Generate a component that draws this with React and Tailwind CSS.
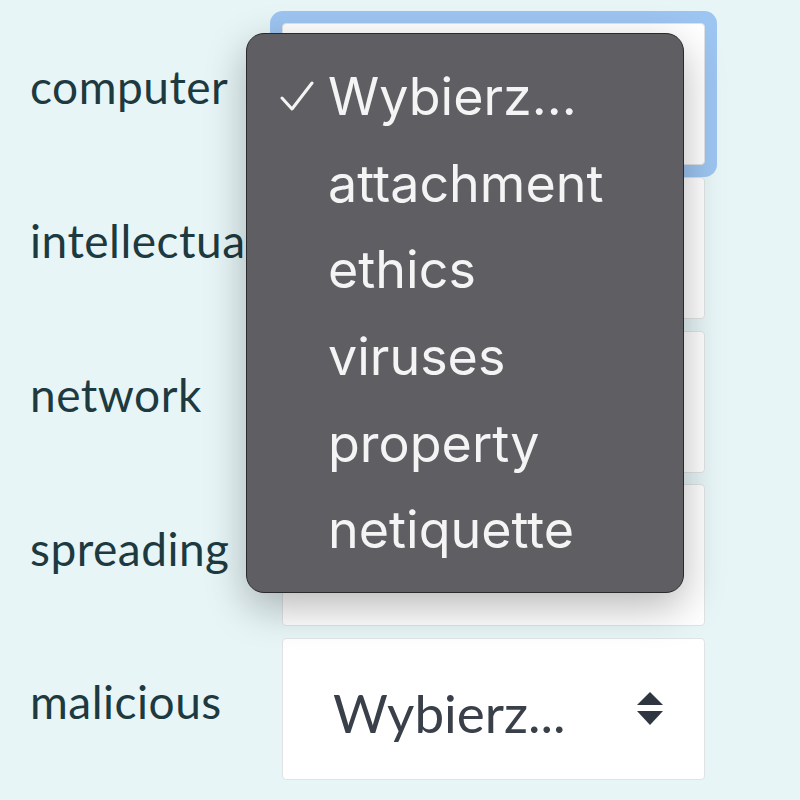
import React from "react";

const labels = ["computer", "intellectual", "network", "spreading", "malicious"];
const options = ["Wybierz...", "attachment", "ethics", "viruses", "property", "netiquette"];

function Arrows() {
  return (
    <svg width="28" height="36" viewBox="0 0 28 36" className="shrink-0">
      <path d="M14 1 L27 14 L1 14 Z" fill="#2f3640" />
      <path d="M1 20 L27 20 L14 34 Z" fill="#2f3640" />
    </svg>
  );
}

function Check() {
  return (
    <svg width="34" height="32" viewBox="0 0 34 32" className="shrink-0">
      <path d="M2 17 L12 28 L32 2" fill="none" stroke="#f4f4f5" strokeWidth="3" strokeLinecap="round" strokeLinejoin="round" />
    </svg>
  );
}

export default function App() {
  return (
    <div className="relative w-[800px] h-[800px] overflow-hidden bg-[#e7f5f7]" style={{ fontFamily: "Lato, 'Open Sans', sans-serif" }}>
      <div className="flex flex-col gap-[11.75px] pt-[23px] pl-[30px]">
        {labels.map((l, i) => (
          <div key={l} className="flex items-center h-[142px]">
            <div className="w-[252px] shrink-0 overflow-hidden whitespace-nowrap text-[46px] leading-[1.2] tracking-[0.5px] text-[#1d3a40] pb-[14px]">{l}</div>
            <div
              className={
                "w-[423px] h-[142px] bg-white border border-[#e0e3e4] rounded-[4px] flex items-center justify-between pl-[50px] pr-[40px] text-[53px] text-[#3a4049] " +
                (i === 0 ? "shadow-[0_0_0_12px_#9dc5f1]" : "")
              }
            >
              <span className="pt-[8px] leading-[1.2]">Wybierz...</span>
              <Arrows />
            </div>
          </div>
        ))}
      </div>

      <div
        className="absolute left-[246px] top-[33px] w-[438px] h-[560px] rounded-[18px] bg-[#5f5f63] border-[1.5px] border-[#2a2a2c] shadow-[0_14px_40px_rgba(0,0,0,0.28)] py-[20px]"
        style={{ fontFamily: "Inter, 'Noto Sans', sans-serif" }}
      >
        {options.map((o, i) => (
          <div key={o} className="flex items-center h-[86.6px] text-[52px] text-[#f4f4f5]">
            <div className="w-[81px] flex justify-end pr-[14px]">{i === 0 ? <Check /> : null}</div>
            <span>{o}</span>
          </div>
        ))}
      </div>
    </div>
  );
}
